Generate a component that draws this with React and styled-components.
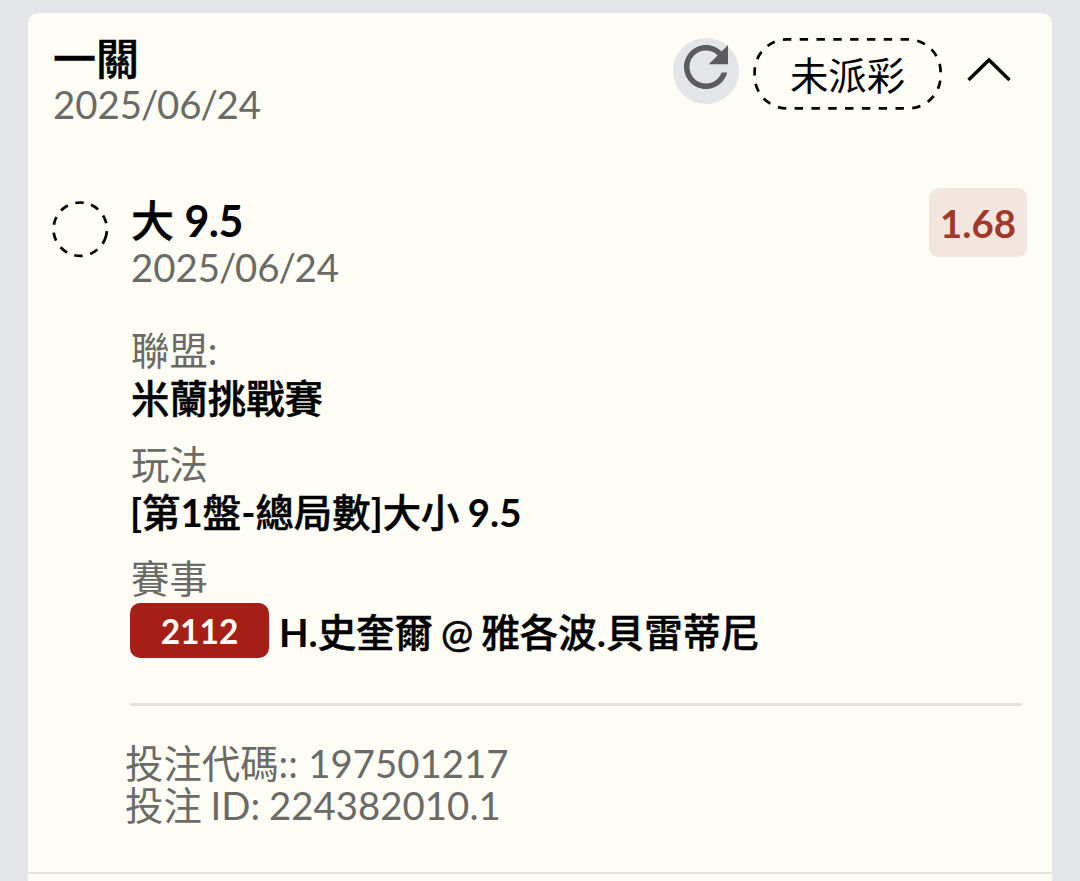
import React from "react"
import styled, { createGlobalStyle } from "styled-components"

const GlobalStyle = createGlobalStyle`
  * {
    box-sizing: border-box;
  }

  body {
    margin: 0;
    background: #e4e5e8;
    font-family: Lato, "Noto Sans CJK TC", sans-serif;
    color: #000;
  }
`

const Page = styled.main`
  height: 881px;
  padding: 13px 28px 0;
  overflow: hidden;
`

const Card = styled.article`
  height: 861px;
  padding: 23px 25px 0 25px;
  background: #fdfdf5;
  border-bottom: 2px solid #e2e2da;
  border-radius: 10px 10px 0 0;
`

const NextCard = styled.div`
  height: 20px;
  background: #fdfdf5;
`

const Header = styled.header`
  display: flex;
  justify-content: space-between;
  height: 152px;
`

// chinese glyphs are set a step lighter than the bold latin ones
const Han = styled.span`
  font-weight: 500;
  -webkit-text-stroke: 0.5px currentColor;
`

const Title = styled.h2`
  margin: 0;
  font-size: 43px;
  font-weight: 700;
  line-height: ${props => props.height || 46}px;
  white-space: nowrap;
`

const Line = styled.span`
  letter-spacing: -0.6px;
`

const DateText = styled.div`
  font-size: 38.4px;
  line-height: 46px;
  color: #6a6a66;
`

const Slash = styled.span`
  margin: 0 -1.2px;
`

const Actions = styled.div`
  display: flex;
  align-items: flex-start;
  padding: 2px 16px 0 0;
`

const RefreshButton = styled.button`
  width: 66px;
  height: 66px;
  margin: 0 14px 0 0;
  padding: 0;
  border: 0;
  border-radius: 50%;
  background: #e4e5e8;

  svg {
    display: block;
    margin-top: -8px;
  }
`

const Status = styled.div`
  position: relative;
  width: 189px;
  height: 72px;
  font-size: 38.4px;
  line-height: 74px;
  text-align: center;

  svg {
    position: absolute;
    top: 0;
    left: 0;
  }
`

const Chevron = styled.svg`
  margin: 18px 0 0 25px;
`

const Bet = styled.section`
  display: flex;
`

const Marker = styled.svg`
  flex: none;
  margin: 13px 22px 0 -1px;
`

const Detail = styled.div`
  flex: 1;
`

const BetHead = styled.div`
  display: flex;
  justify-content: space-between;
  align-items: flex-start;
  height: 138px;
  padding-top: 10px;
`

const Odds = styled.div`
  width: 98px;
  height: 69px;
  margin-top: -10px;
  border-radius: 9px;
  background: #f3e6df;
  color: #a2382a;
  font-size: 38.4px;
  font-weight: 700;
  line-height: 71px;
  text-align: center;
`

const Field = styled.div`
  height: ${props => props.height || 114}px;
`

const Label = styled.div`
  font-size: 38.4px;
  line-height: 48px;
  color: #6a6a66;
`

const Value = styled.div`
  font-size: 38.4px;
  font-weight: 700;
  line-height: 48px;
  word-spacing: -1px;
  white-space: pre;
`

const PlayType = styled(Value)`
  margin-left: -1px;
`

const Match = styled(Value)`
  display: flex;
  align-items: center;
  padding-top: 1px;
  line-height: 59px;
  word-spacing: -1.5px;
`

const GameNo = styled.span`
  width: 139px;
  height: 55px;
  margin: -4px 10px 0 -1px;
  border-radius: 10px;
  background: #a61f17;
  color: #fdfdf5;
  font-size: 33.5px;
  line-height: 57px;
  text-align: center;
`

const Footer = styled.footer`
  width: 892px;
  margin-left: -1px;
  padding-top: 36px;
  border-top: 3px solid #e4e4dc;
`

const Code = styled.div`
  margin-left: -5px;
  font-size: 38.4px;
  line-height: 42px;
  word-spacing: ${props => props.gap}px;
  color: #6a6a66;
`

const RefreshIcon = () => (
  <svg width='66' height='66' viewBox='0 0 24 24' fill='#5c5c5e'>
    <path d='M17.65 6.35C16.2 4.9 14.21 4 12 4c-4.42 0-7.99 3.58-7.99 8s3.57 8 7.99 8c3.73 0 6.84-2.55 7.73-6h-2.08c-.82 2.33-3.04 4-5.65 4-3.31 0-6-2.69-6-6s2.69-6 6-6c1.66 0 3.14.69 4.22 1.78L13 11h7V4l-2.35 2.35z' />
  </svg>
)

const BetDate = () => (
  <DateText>
    2025<Slash>/</Slash>06<Slash>/</Slash>24
  </DateText>
)

export default () => (
  <Page>
    <GlobalStyle />
    <Card>
      <Header>
        <div>
          <Title height={45}>
            <Han>一關</Han>
          </Title>
          <BetDate />
        </div>
        <Actions>
          <RefreshButton aria-label='refresh'>
            <RefreshIcon />
          </RefreshButton>
          <Status>
            <svg width='189' height='72' fill='none' stroke='#000'>
              <rect
                x='1.6'
                y='1.4'
                width='186'
                height='69'
                rx='32.5'
                pathLength='27'
                strokeWidth='2.7'
                strokeDasharray='.5'
                strokeDashoffset='.25'
              />
            </svg>
            未派彩
          </Status>
          <Chevron width='44' height='28' fill='none' stroke='#000' strokeWidth='3.4'>
            <path d='M1.5 24L22 4l20.5 20' />
          </Chevron>
        </Actions>
      </Header>
      <Bet>
        <Marker width='57' height='57' fill='none' stroke='#000' strokeWidth='2.7'>
          <circle
            cx='28.2'
            cy='28.2'
            r='26.7'
            pathLength='360'
            strokeDasharray='18 16.9'
            transform='rotate(15 28.2 28.2)'
          />
        </Marker>
        <Detail>
          <BetHead>
            <div>
              <Title>
                <Han>大</Han> <Line>9.5</Line>
              </Title>
              <BetDate />
            </div>
            <Odds>1.68</Odds>
          </BetHead>
          <Field>
            <Label>聯盟:</Label>
            <Value>
              <Han>米蘭挑戰賽</Han>
            </Value>
          </Field>
          <Field>
            <Label>玩法</Label>
            <PlayType>
              [<Han>第</Han>1<Han>盤</Han>-<Han>總局數</Han>]<Han>大小</Han> 9.5
            </PlayType>
          </Field>
          <Field height={149}>
            <Label>賽事</Label>
            <Match>
              <GameNo>2112</GameNo>
              <span>
                H.<Han>史奎爾 @ 雅各波</Han>.<Han>貝雷蒂尼</Han>
              </span>
            </Match>
          </Field>
          <Footer>
            <Code gap={0.6}>投注代碼:: 197501217</Code>
            <Code gap={-1}>投注 ID: 224382010.1</Code>
          </Footer>
        </Detail>
      </Bet>
    </Card>
    <NextCard />
  </Page>
)
